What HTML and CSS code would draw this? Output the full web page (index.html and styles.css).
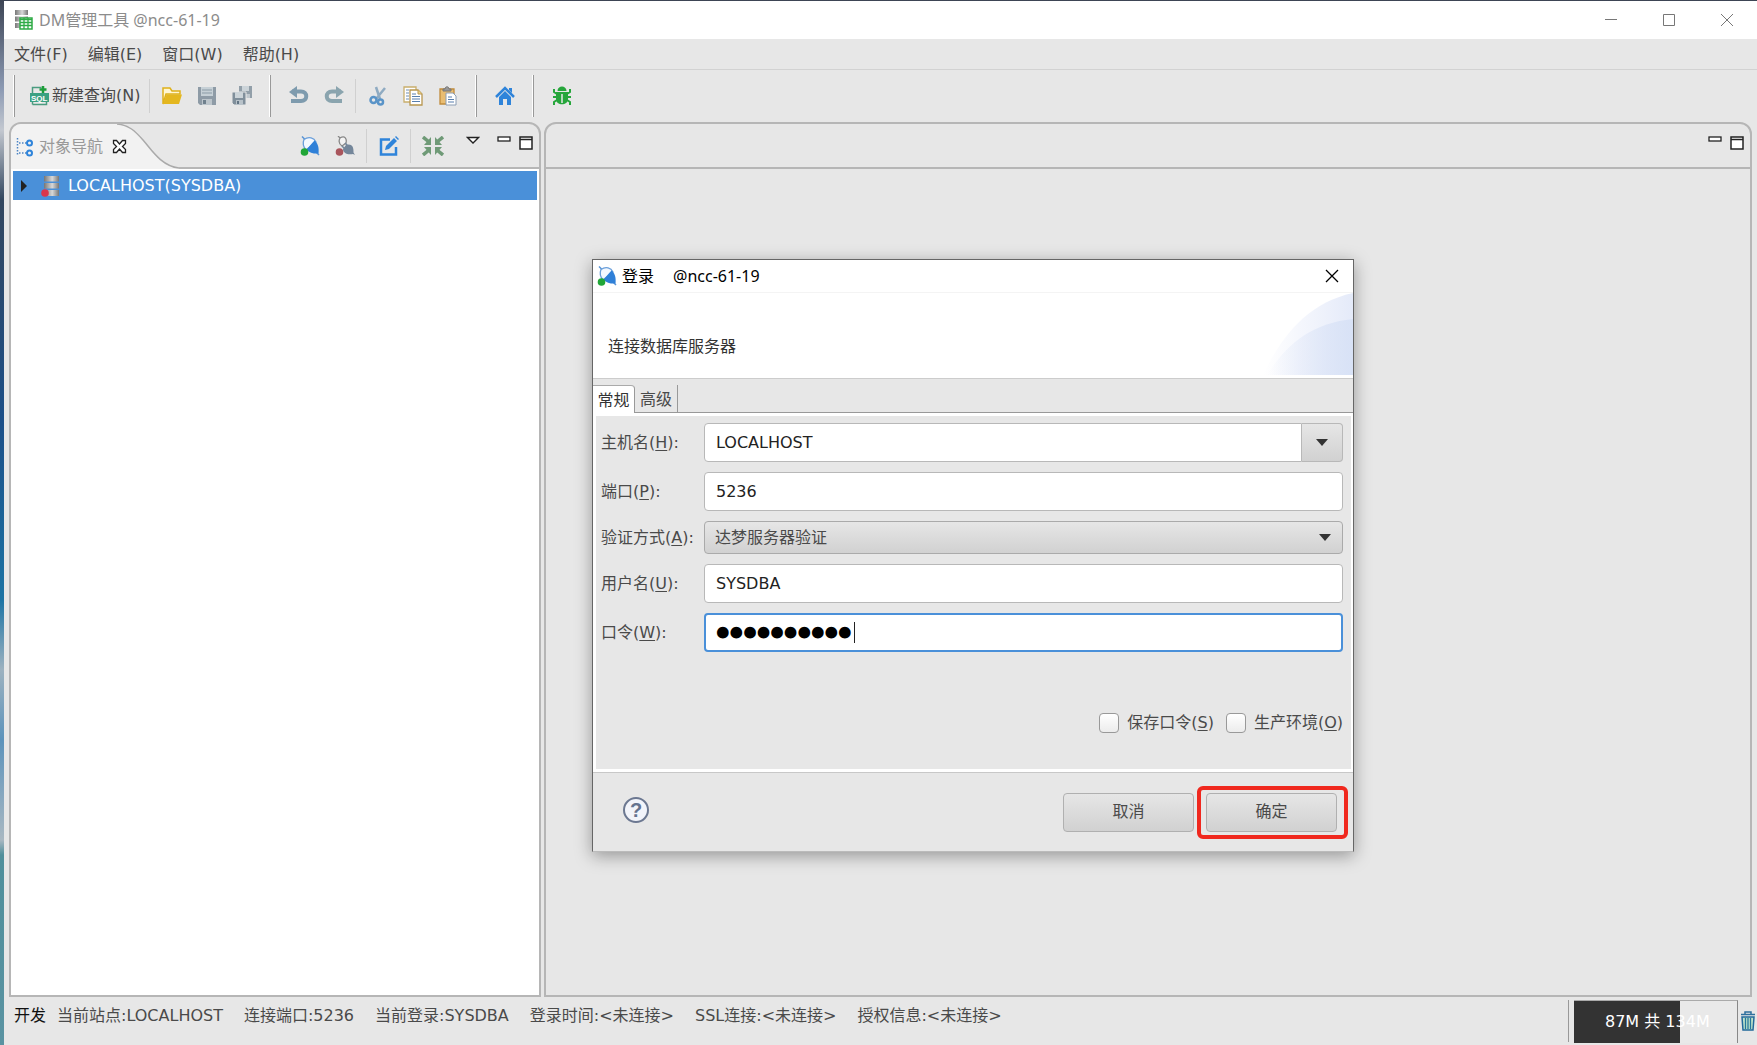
FILE: index.html
```html
<!DOCTYPE html>
<html lang="zh-CN">
<head>
<meta charset="utf-8">
<title>DM管理工具 @ncc-61-19</title>
<link rel="stylesheet" href="styles.css">
</head>
<body>
<svg class="defs" width="0" height="0" aria-hidden="true">
  <defs>
    <linearGradient id="metal" x1="0" x2="1" y1="0" y2="0">
      <stop offset="0" stop-color="#777"/><stop offset=".55" stop-color="#d8d8d8"/><stop offset="1" stop-color="#777"/>
    </linearGradient>
    <linearGradient id="swoosh" x1="0" x2="1" y1="0" y2="0">
      <stop offset="0" stop-color="#e8ecfa" stop-opacity="0"/><stop offset="1" stop-color="#e4eaf9"/>
    </linearGradient>
    <linearGradient id="swoosh-deep" x1="0" x2="1" y1="0" y2="0">
      <stop offset="0" stop-color="#dce4f7" stop-opacity="0"/><stop offset="1" stop-color="#d8e2f6"/>
    </linearGradient>
    <symbol id="plug" viewBox="0 0 20 20">
      <path d="M2 .5l3 3M19 19l-3-3" stroke="#5b95d6" stroke-width="1.500"/>
      <path d="M4 3.500C9 0 14 2 16 6L6 14C3.500 11 2.500 7 4 3.500z" fill="#f3f8ff" stroke="#6a9fda" stroke-width="1.300"/>
      <path d="M14.500 4.500c4 3.500 4.500 8 4 13-4 .5-9-.5-12-4z" fill="#2f80d8"/>
      <circle cx="4.500" cy="16" r="3.800" fill="#21a637"/>
    </symbol>
    <symbol id="min" viewBox="0 0 14 14"><rect x="1" y="1" width="12" height="4" fill="#fff" stroke="#222" stroke-width="1.300"/></symbol>
    <symbol id="max" viewBox="0 0 14 14"><path d="M1 1h12v12H1zM1 3.500h12" fill="#fff" stroke="#222" stroke-width="1.500"/></symbol>
  </defs>
</svg>

<div class="window">
  <header class="titlebar">
    <svg width="20" height="20" viewBox="0 0 20 20"><path d="M1 0h13v5H1zM1 6.500h13v5H1zM1 13h13v5H1z" fill="url(#metal)"/><path d="M6 8h12v11H6z" fill="#fff" stroke="#2eab45" stroke-width="1.500"/><path d="M6 9.500h12M6 12.500h12M6 15.500h12M10 8v11M14 8v11" stroke="#2eab45" stroke-width="1.300"/></svg>
    <h1 class="titlebar-text">DM管理工具 @ncc-61-19</h1>
    <div class="window-controls">
      <button aria-label="最小化"><svg width="14" height="14"><path d="M1 6.500h12" stroke="#777"/></svg></button>
      <button aria-label="最大化"><svg width="14" height="14"><path d="M1.500 1.500h11v11h-11z" stroke="#777" fill="none"/></svg></button>
      <button aria-label="关闭"><svg width="14" height="14"><path d="M1 1l12 12M13 1L1 13" stroke="#777"/></svg></button>
    </div>
  </header>

  <nav class="menubar">
    <button>文件(F)</button><button>编辑(E)</button><button>窗口(W)</button><button>帮助(H)</button>
  </nav>

  <div class="toolbar">
    <i class="grip"></i>
    <button class="new-query">
      <svg width="20" height="20" viewBox="0 0 20 20"><path d="M2.500 18.500V1.500h9M16.500 8v10.500h-14" fill="none" stroke="#4b9c80" stroke-width="1.500"/><path d="M0 7h19v9H0z" fill="#3aa182"/><path d="M13 0v7M9.500 3.500h7" stroke="#1d9d3a" stroke-width="2.500"/><text x="1" y="14.500" class="sql-mark">SQL</text></svg>
      <span>新建查询(N)</span>
    </button>
    <i class="sep"></i>
    <button class="tool" aria-label="打开"><svg width="20" height="20" viewBox="0 0 20 20"><path d="M1 18V2h7l2 3h8v3H4z" fill="#fff6d0" stroke="#dfb11b" stroke-width="1.500"/><path d="M4.500 8.500H20L17 18H1z" fill="#e4b71f"/></svg></button>
    <button class="tool" aria-label="保存"><svg width="20" height="20" viewBox="0 0 20 20"><path d="M1 1h18v18H3l-2-2z" fill="#8e9ba6"/><path d="M4 1h12v9H4z" fill="#c6d0d6"/><path d="M5 4h10M5 7h10" stroke="#8b9ba6"/><path d="M5 13h10v6H5z" fill="#bcc5cb"/><path d="M6 14h3v4H6z" fill="#6f808d"/></svg></button>
    <button class="tool" aria-label="全部保存"><svg width="22" height="20" viewBox="0 0 22 20"><path d="M8 0h13v12H8z" fill="#929fa9"/><path d="M11 0h7v5h-7z" fill="#ccd4d9"/><path d="M15 8h4v4h-4z" fill="#c0c8ce"/><path d="M1 6h14v13H3l-2-2z" fill="#808f9b" stroke="#e7e7e7"/><path d="M4 6h8v6H4z" fill="#ccd4d9"/><path d="M5 14h7v5H5z" fill="#b8c2c9"/><path d="M6 15h2v3H6z" fill="#637584"/></svg></button>
    <i class="grip"></i>
    <button class="tool" aria-label="撤销"><svg width="20" height="20" viewBox="0 0 20 20"><path d="M3 5.500h9c7 0 7 9.500 0 9.500H2" fill="none" stroke="#7e9bae" stroke-width="4"/><path d="M8 0v12L0 6z" fill="#7e9bae"/></svg></button>
    <button class="tool" aria-label="重做"><svg width="20" height="20" viewBox="0 0 20 20"><path d="M17 5.500H8C1 5.500 1 15 8 15h10" fill="none" stroke="#8aa4ae" stroke-width="4"/><path d="M12 0v12l8-6z" fill="#8aa4ae"/></svg></button>
    <i class="sep"></i>
    <button class="tool" aria-label="剪切"><svg width="20" height="20" viewBox="0 0 20 20"><path d="M8 1l4 12M17 2L8 13" stroke="#8fabc2" stroke-width="2.500"/><circle cx="5.500" cy="14" r="3" fill="none" stroke="#5a94c8" stroke-width="2.500"/><circle cx="12.500" cy="16" r="2.500" fill="none" stroke="#5a94c8" stroke-width="2.500"/></svg></button>
    <button class="tool" aria-label="复制"><svg width="20" height="20" viewBox="0 0 20 20"><path d="M1 1h12v15H1z" fill="#fff" stroke="#c9ae6c" stroke-width="1.300"/><path d="M3 4h3M3 7h3M3 10h3M3 13h3" stroke="#708fb3"/><path d="M7 4h8l4 4v11H7z" fill="#fff" stroke="#b8964f" stroke-width="1.300"/><path d="M15 4v4h4" fill="#efd58e" stroke="#b8964f"/><path d="M9 8h4M9 10.500h8M9 13h8M9 15.500h8" stroke="#587fae"/></svg></button>
    <button class="tool" aria-label="粘贴"><svg width="20" height="20" viewBox="0 0 20 20"><path d="M2 3h14v15H2z" fill="#e9bd72" stroke="#c08c3c" stroke-width="1.300"/><path d="M5 5V3h2c0-3 4-3 4 0h2v2z" fill="#989898" stroke="#777"/><path d="M8 7h7l3 3v9H8z" fill="#fff" stroke="#8c9eb5"/><path d="M10 11h4M10 13.500h6M10 16h6" stroke="#587fae"/></svg></button>
    <i class="grip"></i>
    <button class="tool" aria-label="主页"><svg width="20" height="20" viewBox="0 0 20 20"><path d="M1 11L10 2l9 9" fill="none" stroke="#2f84da" stroke-width="2.500"/><path d="M4 11l6-6 6 6v8h-4v-6H8v6H4zM14 2h3v5l-3-3z" fill="#2f84da"/></svg></button>
    <i class="grip"></i>
    <button class="tool" aria-label="调试"><svg width="20" height="20" viewBox="0 0 20 20"><path d="M5.500 5c0-6 9-6 9 0zM4 6h12v7c0 7-12 7-12 0z" fill="#26a63b"/><path d="M5 8L2 6V3M15 8l3-2V3M5 11H1M15 11h4M5 14l-3 2v3M15 14l3 2v3" fill="none" stroke="#26a63b" stroke-width="2"/><path d="M10 8v9" stroke="#e7e7e7" stroke-width="1.500"/></svg></button>
  </div>

  <main class="workbench">
    <section class="panel navigator">
      <div class="panel-head">
        <div class="tab">
          <svg width="18" height="20" viewBox="0 0 18 20"><path d="M1.500 1v17M3 6h7M3 16h7" fill="none" stroke="#4c84c4" stroke-width="1.500" stroke-dasharray="1.500 1.500"/><circle cx="13.500" cy="6" r="2.500" fill="none" stroke="#2f84da" stroke-width="2"/><circle cx="13.500" cy="16" r="2.500" fill="none" stroke="#2f84da" stroke-width="2"/></svg>
          <span>对象导航</span>
          <button aria-label="关闭标签"><svg width="15" height="15" viewBox="0 0 15 15"><path d="M1.500 1.500h3l3 3.500 3-3.500h3v3l-3 3 3 3v3h-3l-3-3.500-3 3.500h-3v-3l3-3-3-3z" fill="#fff" stroke="#222" stroke-width="1.300"/></svg></button>
        </div>
        <svg class="tab-curve" width="62" height="45" viewBox="0 0 62 45"><path d="M0 0C12 1 18 7 26 16S44 42 62 44V45H0z" fill="#f2f2f2"/><path d="M0 0C12 1 18 7 26 16S44 42 62 44" fill="none" stroke="#aaa" stroke-width="1.500"/></svg>
        <div class="panel-tools">
          <button class="tool" aria-label="连接"><svg width="20" height="20"><use href="#plug"/></svg></button>
          <button class="tool" aria-label="断开"><svg width="20" height="20" viewBox="0 0 20 20"><path d="M3 0l2 2c5-3 7 1 6 5L7 10C4 8 3 6 5 2" fill="#f3f3f3" stroke="#888" stroke-width="1.300"/><path d="M11 9c5-2 8 1 7.500 7.500l1.500 2.500-2-1c-6 1-10-1-10-5z" fill="#74869a"/><path d="M10 7l3 3M7 10l3 3" stroke="#74869a" stroke-width="1.500"/><circle cx="4.500" cy="16" r="3.800" fill="#a9555c"/></svg></button>
          <i class="sep"></i>
          <button class="tool" aria-label="编辑"><svg width="20" height="20" viewBox="0 0 20 20"><path d="M11 3.500H2v15h15V11" fill="none" stroke="#2f84da" stroke-width="2.500"/><path d="M6 14l1-4 8-8 3 3-8 8zM16 1l1-1 3 3-1 1z" fill="#2f84da"/></svg></button>
          <i class="sep"></i>
          <button class="tool" aria-label="全部折叠"><svg width="22" height="20" viewBox="0 0 22 20"><path d="M1 1l6 5M21 1l-6 5M1 19l6-5M21 19l-6-5" stroke="#6f9a77" stroke-width="3.500"/><path d="M9 1v8H2zM13 1v8h7zM9 19v-8H2zM13 19v-8h7z" fill="#6f9a77"/></svg></button>
          <button class="mini" aria-label="视图菜单"><svg width="14" height="14"><path d="M1.500 1.500h11L7 7z" fill="#fff" stroke="#222" stroke-width="1.300"/></svg></button>
          <button class="mini gap" aria-label="最小化"><svg width="14" height="14"><use href="#min"/></svg></button>
          <button class="mini" aria-label="最大化"><svg width="14" height="14"><use href="#max"/></svg></button>
        </div>
      </div>
      <div class="tree">
        <div class="tree-row">
          <svg width="8" height="12"><path d="M1 0l6 6-6 6z" fill="#222"/></svg>
          <svg width="20" height="21" viewBox="0 0 20 21"><path d="M3 0h15v5.500H3zM3 7h15v5.500H3zM3 14h15v6H3z" fill="url(#metal)"/><circle cx="4" cy="17" r="3.800" fill="#d9364a"/></svg>
          <span>LOCALHOST(SYSDBA)</span>
        </div>
      </div>
    </section>

    <section class="panel editor">
      <div class="panel-head">
        <div class="panel-tools">
          <button class="mini" aria-label="最小化"><svg width="14" height="14"><use href="#min"/></svg></button>
          <button class="mini" aria-label="最大化"><svg width="14" height="14"><use href="#max"/></svg></button>
        </div>
      </div>
    </section>
  </main>

  <footer class="statusbar">
    <div class="status-items">
      <strong>开发</strong>
      <span>当前站点:LOCALHOST</span><span>连接端口:5236</span><span>当前登录:SYSDBA</span><span>登录时间:&lt;未连接&gt;</span><span>SSL连接:&lt;未连接&gt;</span><span>授权信息:&lt;未连接&gt;</span>
    </div>
    <i class="grip"></i>
    <div class="memory">87M 共 134M</div>
    <button class="trash" aria-label="回收内存"><svg width="16" height="20" viewBox="0 0 16 20"><path d="M1 3.500h14M5 3V1h6v2" fill="none" stroke="#2d6f9d" stroke-width="1.500"/><path d="M2 6h12l-1 13H3z" fill="#bfe3c9" stroke="#22699b" stroke-width="1.500"/><path d="M5.500 7v11M8 7v11M10.500 7v11" stroke="#25779c" stroke-width="1.300"/></svg></button>
  </footer>
</div>

<form class="dialog" role="dialog" aria-labelledby="dialog-title">
  <header class="dialog-title">
    <svg width="20" height="20"><use href="#plug"/></svg>
    <h2 id="dialog-title"><span>登录</span><span>@ncc-61-19</span></h2>
    <button type="button" aria-label="关闭"><svg width="14" height="14"><path d="M1 1l12 12M13 1L1 13" stroke="#000" stroke-width="1.300"/></svg></button>
  </header>
  <div class="banner">
    <p>连接数据库服务器</p>
    <svg width="90" height="82" viewBox="0 0 90 82"><path d="M0 82C18 44 44 10 90 0v82z" fill="url(#swoosh)"/><path d="M4 82C24 50 50 30 90 26v56z" fill="url(#swoosh-deep)"/></svg>
  </div>
  <div class="tabs" role="tablist">
    <button type="button" role="tab" aria-selected="true">常规</button>
    <button type="button" role="tab" aria-selected="false">高级</button>
  </div>
  <div class="tab-page">
    <div class="fields">
      <label for="host">主机名(<u>H</u>):</label>
      <div class="combo"><input id="host" type="text" value="LOCALHOST"><button type="button" aria-label="选择主机"><svg width="12" height="7"><path d="M0 0h12L6 7z" fill="#333"/></svg></button></div>
      <label for="port">端口(<u>P</u>):</label>
      <input id="port" type="text" value="5236">
      <label for="auth">验证方式(<u>A</u>):</label>
      <div class="choice"><select id="auth"><option>达梦服务器验证</option></select><svg width="12" height="7"><path d="M0 0h12L6 7z" fill="#333"/></svg></div>
      <label for="user">用户名(<u>U</u>):</label>
      <input id="user" type="text" value="SYSDBA">
      <label for="password">口令(<u>W</u>):</label>
      <div class="secret"><input id="password" type="password" value="0123456789"><i class="caret"></i></div>
    </div>
    <div class="options">
      <label><input type="checkbox">保存口令(<u>S</u>)</label>
      <label><input type="checkbox">生产环境(<u>O</u>)</label>
    </div>
  </div>
  <footer class="dialog-foot">
    <button type="button" class="help" aria-label="帮助"><span>?</span></button>
    <button type="button" class="push">取消</button>
    <button type="submit" class="push marked">确定</button>
  </footer>
</form>
</body>
</html>
```

FILE: styles.css
```css
* { box-sizing: border-box; }
html, body { height: 100%; }
body {
  margin: 0;
  padding: 1px 0 0 4px;
  position: relative;
  overflow: hidden;
  background: linear-gradient(#3c4454, #8d9bb4 90px, #c3c8d0 130px, #33475f 200px, #1c4f88 420px, #1d74a4 600px, #9db2c0 670px, #5c93bb 740px, #a9b8c2 840px, #4f8f9b 855px, #5a93a2);
  font: 16px/20px "DejaVu Sans", "Noto Sans CJK SC", sans-serif;
  color: #4a4a4a;
}
button, input, select { font: inherit; color: inherit; }
button { display: flex; align-items: center; justify-content: center; padding: 0; border: 0; background: none; white-space: nowrap; }
svg { flex: none; display: block; }
.defs { position: absolute; }

.window { display: flex; flex-direction: column; height: 100%; background: #e7e7e7; }

.titlebar { display: flex; align-items: center; gap: 5px; height: 38px; padding: 0 1px 0 10px; background: #fff; }
.titlebar-text { margin: 0; font: 16px/20px "Noto Sans", "Noto Sans CJK SC", sans-serif; color: #8c8c8c; }
.window-controls { display: flex; margin-left: auto; }
.window-controls button { width: 58px; height: 38px; }

.menubar { display: flex; gap: 20px; height: 31px; padding: 2px 10px 0; border-bottom: 1px solid #d2d2d2; }

.toolbar { display: flex; align-items: center; height: 52px; }
.new-query { gap: 2px; margin: 0 5px; height: 34px; }
.tool { width: 35px; height: 34px; flex: none; }
.sql-mark { font: bold 8px "Liberation Sans", sans-serif; fill: #fff; }
.grip { flex: none; width: 2px; height: 42px; margin: 0 10px; border-left: 1px solid #fff; border-right: 1px solid #999; }
.toolbar .grip:first-child { margin-left: 9px; }
.sep { flex: none; width: 1px; height: 34px; margin: 0 4px; background: #d0d0d0; }

.workbench { flex: 1; display: grid; grid-template-columns: 532px 1fr; gap: 3px; min-height: 0; padding: 0 5px; }
.panel { display: flex; flex-direction: column; border: 2px solid #b6b6b6; border-radius: 12px 12px 0 0; overflow: hidden; }
.panel-head { display: flex; height: 45px; }
.tab { position: relative; z-index: 1; display: flex; align-items: center; gap: 5px; padding: 0 0 0 5px; width: 106px; background: #f2f2f2; color: #999; white-space: nowrap; }
.tab button { flex: none; margin-left: 4px; }
.panel-tools { flex: 1; display: flex; align-items: center; justify-content: flex-end; padding-right: 2px; border-bottom: 2px solid #b6b6b6; }
.mini { width: 22px; height: 14px; margin-bottom: 6px; }
.mini.gap { margin-left: 9px; }
.panel-tools .tool + .mini { margin-left: 12px; }
.tree { flex: 1; padding: 2px; background: #fff; }
.tree-row { display: flex; align-items: center; gap: 13px; height: 29px; padding: 1px 8px 0 7px; background: #4a90d9; color: #fff; }
.tree-row span { margin-left: -6px; }

.statusbar { display: flex; height: 48px; }
.status-items { display: flex; gap: 21px; margin: 9px auto 0 10px; white-space: nowrap; }
.status-items strong { margin-right: -10px; font-weight: 400; color: #111; }
.statusbar .grip { margin: 3px 5px; border-left-width: 0; }
.memory { width: 164px; height: 43px; margin-top: 3px; padding-left: 31px; line-height: 42px; color: #fff; background: linear-gradient(90deg, #333 106px, #e9e9e9 106px); border-top: 1px solid #aaa; border-right: 1px solid #888; white-space: nowrap; }
.trash { width: 19px; height: 42px; margin-top: 3px; }

.dialog { position: absolute; left: 592px; top: 259px; width: 762px; border: 1px solid #666; border-bottom-color: #bbb; background: #e7e7e7; box-shadow: 0 4px 16px rgba(0, 0, 0, .35); }
.dialog-title { display: flex; align-items: center; height: 33px; padding: 0 14px 0 4px; background: #fff; border-bottom: 1px solid #f4f4f4; }
.dialog-title h2 { display: flex; gap: 19px; margin: 0 auto 0 5px; font: 16px/20px "Noto Sans", "Noto Sans CJK SC", sans-serif; color: #000; }
.banner { display: flex; justify-content: space-between; height: 86px; background: #fff; border-bottom: 1px solid #ccc; color: #333; }
.banner p { margin: 44px 0 0 15px; }
.tabs { display: flex; align-items: flex-end; height: 34px; border-bottom: 1px solid #999; }
.tabs button { width: 43px; height: 27px; padding-top: 2px; border-right: 1px solid #999; }
.tabs button[aria-selected="true"] { width: 42px; height: 28px; margin-bottom: -1px; background: #fff; border-top: 1px solid #aaa; border-radius: 0 4px 0 0; color: #333; }
.tab-page { height: 359px; padding: 7px 8px 0 5px; border: 3px solid #fff; border-width: 3px 2px 3px 3px; }
.fields { display: grid; grid-template-columns: 103px 1fr; row-gap: 10px; align-items: center; }
.fields label { white-space: nowrap; }
u { text-underline-offset: 2px; }
.fields input { width: 100%; height: 39px; padding: 0 11px; border: 1px solid #b8b8b8; border-radius: 4px; background: #fff; color: #222; outline: 0; }
.combo { display: flex; }
.combo input { border-radius: 4px 0 0 4px; }
.combo button { flex: none; width: 41px; border: 1px solid #b8b8b8; border-left: 0; border-radius: 0 4px 4px 0; }
.combo button, .choice select, .push { background: linear-gradient(#e6e6e6, #d1d1d1); }
.choice { display: grid; align-items: center; }
.choice > * { grid-area: 1 / 1; }
.choice select { appearance: none; width: 100%; height: 33px; padding: 0 10px; border: 1px solid #aaa; border-radius: 4px; }
.choice svg { justify-self: end; margin-right: 12px; pointer-events: none; }
.secret { position: relative; }
.fields .secret input { display: block; padding: 0 10px; border: 2px solid #4a90d9; font-size: 23px; color: #000; -webkit-text-stroke: 5px #000; }
.caret { position: absolute; left: 150px; top: 9px; width: 1px; height: 21px; background: #222; }
.options { display: flex; justify-content: flex-end; gap: 12px; margin-top: 61px; }
.options label { display: flex; align-items: center; white-space: nowrap; }
.options input { appearance: none; width: 20px; height: 20px; margin: 0 8px 0 0; border: 1px solid #999; border-radius: 4px; background: linear-gradient(#fff, #ececec); }
.dialog-foot { display: flex; align-items: center; gap: 12px; height: 79px; padding: 0 16px 0 30px; border-top: 1px solid #c8c8c8; }
.help { width: 26px; height: 26px; margin: 0 auto 4px 0; border: 2px solid #6c7891; border-radius: 50%; background: #f2f4fa; font: bold 20px/22px "Liberation Sans", sans-serif; color: #65738f; }
.push { position: relative; width: 131px; height: 39px; border: 1px solid #b0b0b0; border-radius: 4px; }
.marked::after { content: ""; position: absolute; inset: -8px -12px -8px -10px; border: 4px solid #f0281e; border-radius: 6px; }
```
